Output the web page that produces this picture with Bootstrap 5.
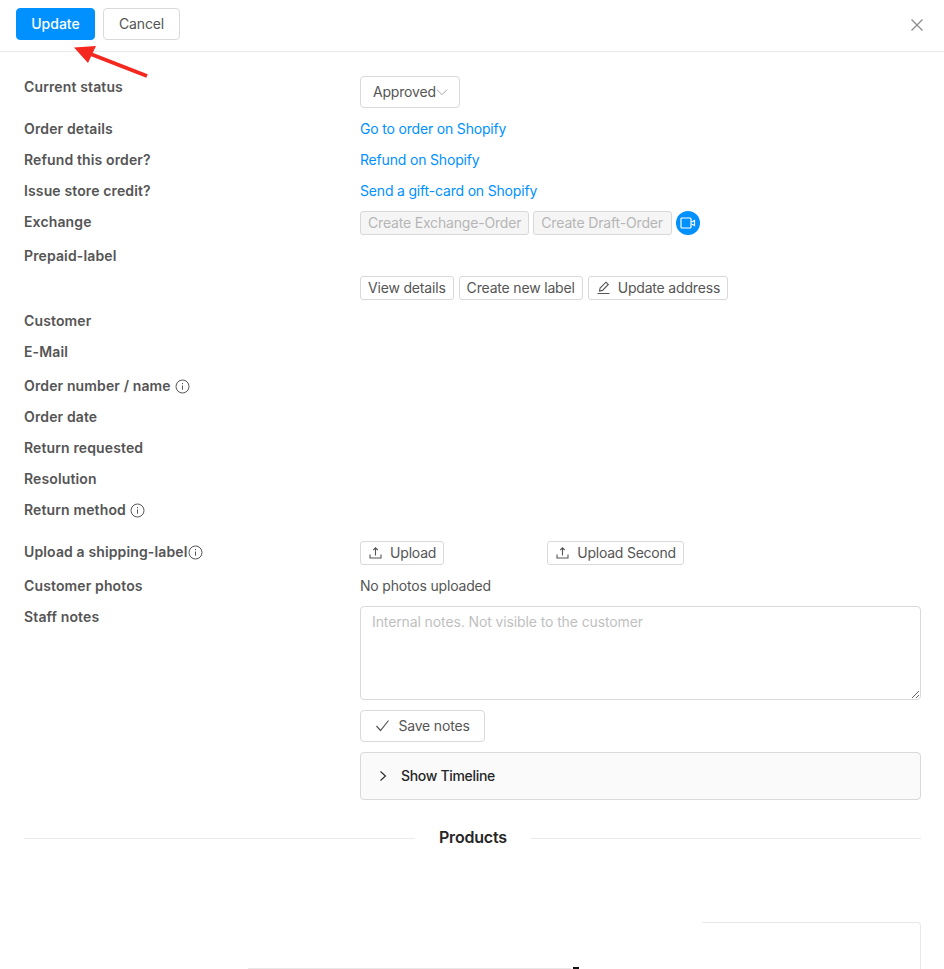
<!DOCTYPE html>
<html lang="en">
<head>
<meta charset="utf-8">
<title>Return details</title>
<link rel="stylesheet" href="https://cdn.jsdelivr.net/npm/bootstrap@5.3.0/dist/css/bootstrap.min.css">
<style>
html,body{height:969px;overflow:hidden}
body{font-family:Inter,"Liberation Sans",sans-serif;font-size:14px;line-height:22px;color:#555;background:#fff;position:relative;letter-spacing:-.18px}
.topbar{height:52px;border-bottom:1px solid #ebebeb;padding:8px 16px 0}
.act{height:32px;padding:0 15px;font-size:14px;line-height:30px;border-radius:4px;border:1px solid #d9d9d9;color:#555;background:#fff;letter-spacing:-.18px}
.act-main{background:#0091ff;border-color:#0091ff;color:#fff;font-weight:500;width:79px;padding:0;letter-spacing:0}
.act-cancel{width:77px;padding:0;margin-left:8px}
.closer{margin-top:5px;width:24px;height:24px;background:none;border:0;padding:0;margin-right:-1px}
.sheet{padding:24px 23px 0 24px}
.frow{display:flex;margin-bottom:9px}
.rowgap{margin-bottom:10px}
.rowgap-l{margin-bottom:12px}
.rowgap-xl{margin-bottom:20px}
.flabel{width:336px;flex:none;font-weight:600;color:#555;display:flex;align-items:center;align-self:flex-start;height:22px;letter-spacing:.13px}
.flabel svg{margin-left:4px}
.flabel.tight svg{margin-left:0}
.fval{flex:1;min-width:0;color:#555}
.fval a{color:#0091ff;text-decoration:none}
.status-sel{width:100px;height:32px;border:1px solid #d9d9d9;border-radius:4px;padding:0 11px 0 12px;color:#555;background:#fff;line-height:30px}
.sbtn{height:24px;padding:0 7px;font-size:14px;line-height:22px;border:1px solid #d9d9d9;border-radius:3px;color:#555;background:#fff;white-space:nowrap;letter-spacing:-.18px}
.sbtn[disabled]{background:#f5f5f5;color:#b5b5b5;opacity:1;border-color:#d9d9d9}
.sbtn svg{margin-right:7px;vertical-align:-2px}
.sbtn-wide{padding:0 8px 0 7px;letter-spacing:-.15px}
.vidbtn{width:24px;height:24px;border-radius:50%;background:#0091ff;flex:none}
.gap-four{gap:4px}
.gap-five{gap:5px;padding-top:31px}
.second-up{margin-left:103px;letter-spacing:-.24px}
.notes{height:94px;border:1px solid #d9d9d9;border-radius:4px;padding:4px 11px;color:#555;font-size:14px;line-height:22px;display:block;width:100%;letter-spacing:-.11px}
.notes::placeholder{color:#bfbfbf}
.savebtn{height:32px;width:125px;margin-top:10px;padding:0;border:1px solid #d9d9d9;border-radius:4px;color:#555;background:#fff;font-size:14px;line-height:30px;letter-spacing:-.18px}
.savebtn svg{margin-right:8px;vertical-align:-2px}
.timeline{height:48px;margin-top:10px;border:1px solid #d9d9d9;border-radius:4px;background:#fafafa;color:#262626;font-weight:500;padding-left:16px;letter-spacing:-.32px}
.timeline svg{margin-right:12px}
.splitter{margin-top:27px;height:22px;color:#262626;font-size:16px;font-weight:600}
.splitter::before,.splitter::after{content:"";flex:1;border-top:1px solid #ebebeb;margin-top:1px}
.splitter::before{flex:0 0 391px}
.splitter span{padding:0 24px;margin-top:-2px;letter-spacing:-.2px}
.pcard{margin-top:73px;margin-left:678px;width:219px;height:60px;border-top:1px solid #e8e8e8;border-right:1px solid #e8e8e8;border-top-right-radius:4px}
.mark-over{position:absolute;left:0;top:0;pointer-events:none}
.tail-line{position:absolute;left:248px;top:968px;width:323px;height:1px;background:#e8e8e8}
.tail-bit{position:absolute;left:573px;top:967px;width:6px;height:2px;background:#111}
</style>
</head>
<body>
<header class="topbar d-flex align-items-start">
  <button class="btn act act-main" type="button">Update</button>
  <button class="btn act act-cancel" type="button">Cancel</button>
  <button class="closer ms-auto" type="button" aria-label="Close">
    <svg width="24" height="24" viewBox="0 0 24 24" fill="none" stroke="#8c8c8c" stroke-width="1.3"><path d="M6.5 6.5l11 11M17.5 6.5l-11 11"/></svg>
  </button>
</header>
<main class="sheet">
  <div class="frow rowgap">
    <div class="flabel">Current status</div>
    <div class="fval"><div class="status-sel d-flex align-items-center justify-content-between">Approved<svg width="12" height="12" viewBox="0 0 12 12" fill="none" stroke="#a6a6a6" stroke-width="1"><path d="M.8 3.5L6 8.7l5.2-5.2"/></svg></div></div>
  </div>
  <div class="frow"><div class="flabel">Order details</div><div class="fval"><a href="#">Go to order on Shopify</a></div></div>
  <div class="frow"><div class="flabel">Refund this order?</div><div class="fval"><a href="#">Refund on Shopify</a></div></div>
  <div class="frow"><div class="flabel">Issue store credit?</div><div class="fval"><a href="#">Send a gift-card on Shopify</a></div></div>
  <div class="frow rowgap">
    <div class="flabel">Exchange</div>
    <div class="fval d-flex align-items-center gap-four">
      <button class="btn sbtn" disabled type="button">Create Exchange-Order</button>
      <button class="btn sbtn sbtn-wide" disabled type="button">Create Draft-Order</button>
      <span class="vidbtn d-flex align-items-center justify-content-center">
        <svg width="16" height="14" viewBox="0 0 16 14" fill="none" stroke="#fff" stroke-width="1.2"><rect x="1" y="2" width="10" height="10" rx="1"/><path d="M11.5 6l3-1.5v5L11.5 8"/></svg>
      </span>
    </div>
  </div>
  <div class="frow rowgap">
    <div class="flabel">Prepaid-label</div>
    <div class="fval d-flex gap-five">
      <button class="btn sbtn" type="button">View details</button>
      <button class="btn sbtn" type="button">Create new label</button>
      <button class="btn sbtn" type="button"><svg width="15" height="15" viewBox="0 0 15 15" fill="none" stroke="#555" stroke-width="1.1"><path d="M1.5 13.5h12M3.5 11l.6-3L10 2.2l2.3 2.3L6.5 10.4z"/></svg>Update address</button>
    </div>
  </div>
  <div class="frow"><div class="flabel">Customer</div></div>
  <div class="frow rowgap-l"><div class="flabel">E-Mail</div></div>
  <div class="frow"><div class="flabel">Order number / name<svg width="15" height="15" viewBox="0 0 15 15" fill="none" stroke="#555"><circle cx="7.5" cy="7.5" r="6.5"/><path d="M7.5 6.5v4.2M7.5 4v1.2"/></svg></div></div>
  <div class="frow"><div class="flabel">Order date</div></div>
  <div class="frow"><div class="flabel">Return requested</div></div>
  <div class="frow"><div class="flabel">Resolution</div></div>
  <div class="frow rowgap-xl"><div class="flabel">Return method<svg width="15" height="15" viewBox="0 0 15 15" fill="none" stroke="#555"><circle cx="7.5" cy="7.5" r="6.5"/><path d="M7.5 6.5v4.2M7.5 4v1.2"/></svg></div></div>
  <div class="frow rowgap">
    <div class="flabel tight">Upload a shipping-label<svg width="15" height="15" viewBox="0 0 15 15" fill="none" stroke="#555"><circle cx="7.5" cy="7.5" r="6.5"/><path d="M7.5 6.5v4.2M7.5 4v1.2"/></svg></div>
    <div class="fval d-flex">
      <button class="btn sbtn" type="button"><svg width="15" height="15" viewBox="0 0 15 15" fill="none" stroke="#555" stroke-width="1.1"><path d="M2 9.5v3.5h11V9.5M7.5 10.5V3M5.3 5l2.2-2.2L9.7 5"/></svg>Upload</button>
      <button class="btn sbtn second-up" type="button"><svg width="15" height="15" viewBox="0 0 15 15" fill="none" stroke="#555" stroke-width="1.1"><path d="M2 9.5v3.5h11V9.5M7.5 10.5V3M5.3 5l2.2-2.2L9.7 5"/></svg>Upload Second</button>
    </div>
  </div>
  <div class="frow"><div class="flabel">Customer photos</div><div class="fval">No photos uploaded</div></div>
  <div class="frow mb-0">
    <div class="flabel">Staff notes</div>
    <div class="fval">
      <textarea class="notes form-control" placeholder="Internal notes. Not visible to the customer"></textarea>
      <button class="btn savebtn" type="button"><svg width="15" height="15" viewBox="0 0 15 15" fill="none" stroke="#555" stroke-width="1.2"><path d="M1.5 8l4 4.5 8-10"/></svg>Save notes</button>
      <div class="timeline d-flex align-items-center">
        <svg width="12" height="12" viewBox="0 0 12 12" fill="none" stroke="#262626" stroke-width="1.1"><path d="M3.5 1.5L8.5 6l-5 4.5"/></svg>Show Timeline
      </div>
    </div>
  </div>
  <div class="splitter d-flex align-items-center"><span>Products</span></div>
  <div class="pcard"></div>
</main>
<div class="tail-line"></div>
<div class="tail-bit"></div>
<svg class="mark-over" width="944" height="100" viewBox="0 0 944 100"><path d="M147 76L88 53" stroke="#f5281f" stroke-width="4" fill="none"/><path d="M74 47.5L96 46L88 63z" fill="#f5281f"/></svg>
</body>
</html>
